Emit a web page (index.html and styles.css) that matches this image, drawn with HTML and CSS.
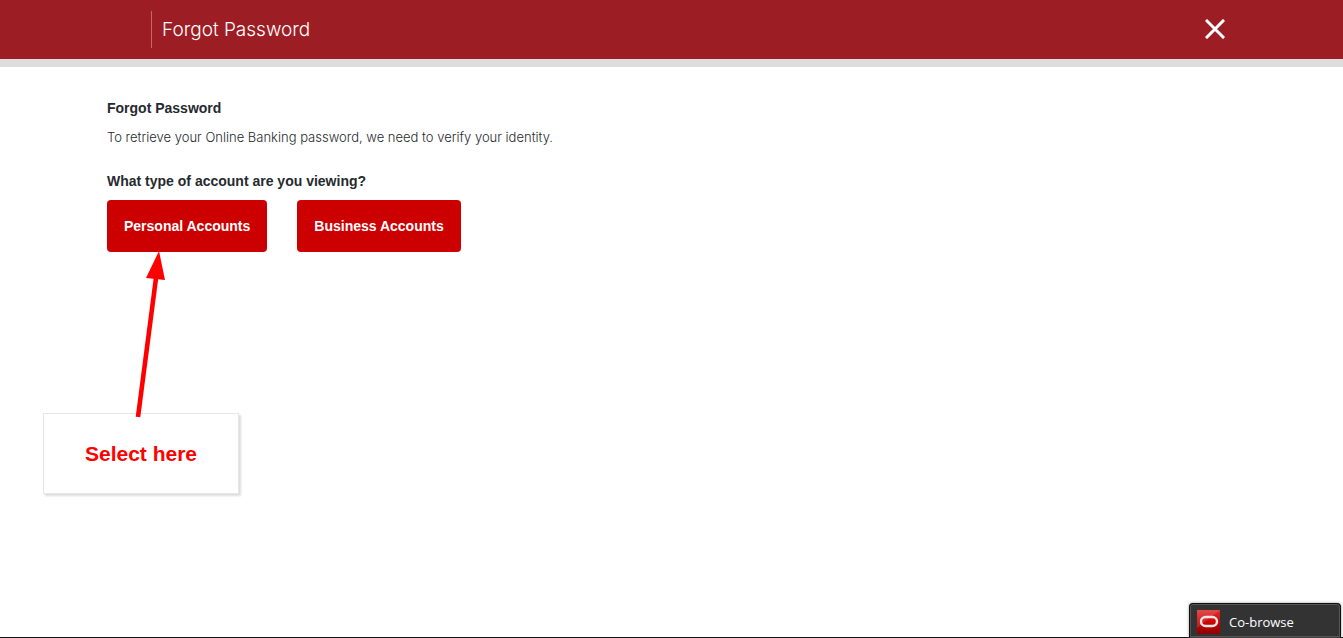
FILE: index.html
```html
<!DOCTYPE html>
<html lang="en">
<head>
    <meta charset="UTF-8">
    <meta name="viewport" content="width=device-width, initial-scale=1.0">
    <title>Forgot Password</title>
    <link rel="stylesheet" href="styles.css">
</head>
<body>
    <header class="header">
        <div class="container header-row">
            <span class="header-title">Forgot Password</span>
            <button type="button" class="close" aria-label="Close">
                <svg width="20" height="20" viewBox="0 0 20 20">
                    <path d="M2 2 L18 18 M18 2 L2 18" fill="none" stroke="#fff" stroke-width="3" stroke-linecap="square"/>
                </svg>
            </button>
        </div>
    </header>

    <main class="container content">
        <h1>Forgot Password</h1>
        <p>To retrieve your Online Banking password, we need to verify your identity.</p>
        <h2>What type of account are you viewing?</h2>
        <div class="account-buttons">
            <div class="account-choice">
                <button type="button" class="btn">Personal Accounts</button>
                <div class="callout">
                    <svg class="arrow" width="30" height="168" viewBox="0 0 30 168">
                        <path d="M21 26 L3 165" stroke="#f00" stroke-width="4.6"/>
                        <path d="M24 -1 L11 26 L30 28 Z" fill="#f00"/>
                    </svg>
                    <div class="callout-box">Select here</div>
                </div>
            </div>
            <button type="button" class="btn">Business Accounts</button>
        </div>
    </main>

    <footer class="footer">
        <button type="button" class="cobrowse">
            <svg width="23" height="24" viewBox="0 0 23 24">
                <defs>
                    <linearGradient id="logo-red" x1="0" y1="0" x2="0" y2="1">
                        <stop offset="0" stop-color="#e03030"/>
                        <stop offset="0.5" stop-color="#cc0505"/>
                        <stop offset="1" stop-color="#8e0000"/>
                    </linearGradient>
                </defs>
                <rect width="23" height="24" fill="url(#logo-red)"/>
                <path d="M0 0 H23 L0 18 Z" fill="#fff" fill-opacity="0.12"/>
                <rect x="4" y="7" width="16" height="9" rx="4.5" fill="none" stroke="#f4e4e4" stroke-width="2.4"/>
            </svg>
            Co-browse
        </button>
    </footer>
</body>
</html>
```

FILE: styles.css
```css
/* General Style */
* {
    box-sizing: border-box;
}

body {
    display: flex;
    flex-direction: column;
    min-height: 100vh;
    margin: 0;
    font-family: "Liberation Sans", Arial, sans-serif;
    font-size: 14px;
    line-height: 20px;
    color: #262a2e;
    background-color: #fff;
}

button {
    font-family: inherit;
    border: none;
    cursor: pointer;
}

svg {
    display: block;
}

.container {
    width: 100%;
    max-width: 1129px;
    margin: 0 auto;
}

/* Header */
.header {
    background-color: #9d1d24;
    border-bottom: 8px solid #ddd;
}

.header-row {
    display: flex;
    align-items: center;
    justify-content: space-between;
    height: 59px;
    padding: 0 11px 0 44px;
}

.header-title {
    padding-left: 10px;
    border-left: 1px solid #c4666b;
    font-family: Inter, "Liberation Sans", sans-serif;
    font-size: 19px;
    font-weight: 300;
    line-height: 37px;
    color: #fff;
}

.close {
    padding: 0 0 2px;
    background: none;
}

/* Content */
.content {
    flex: 1;
    padding-top: 31px;
}

h1,
h2 {
    margin: 0;
    font-size: 14px;
    font-weight: 700;
}

p {
    margin: 9px 0 24px;
    font-family: Inter, "Liberation Sans", sans-serif;
    font-size: 13px;
    font-weight: 300;
}

.account-buttons {
    display: flex;
    gap: 30px;
    margin-top: 9px;
}

.account-choice {
    position: relative;
}

.btn {
    height: 52px;
    padding: 0 17px;
    border-radius: 4px;
    font-size: 14px;
    font-weight: 700;
    color: #fff;
    background-color: #c00;
}

/* Callout over the page */
.callout {
    position: absolute;
    top: 100%;
    left: -64px;
    width: 196px;
    padding-top: 161px;
}

.arrow {
    position: absolute;
    top: 0;
    left: 92px;
    overflow: visible;
}

.callout-box {
    padding: 24px 0;
    border: 1px solid #e6e6e6;
    box-shadow: 2px 2px 2px #ddd;
    font-size: 21px;
    font-weight: 700;
    line-height: 31px;
    text-align: center;
    color: #f00;
}

/* Co-browse bar */
.footer {
    display: flex;
    justify-content: flex-end;
    padding-right: 2px;
    border-bottom: 1px solid #111;
}

.cobrowse {
    display: flex;
    align-items: center;
    gap: 9px;
    width: 152px;
    height: 34px;
    padding: 2px 7px 0;
    border: 1px solid #111;
    border-bottom: none;
    border-radius: 4px 4px 0 0;
    box-shadow: inset 0 0 0 1px #555, 0 0 3px #999;
    font-family: "Open Sans", "Noto Sans", sans-serif;
    font-size: 13px;
    color: #fff;
    background-color: #333;
}
```
